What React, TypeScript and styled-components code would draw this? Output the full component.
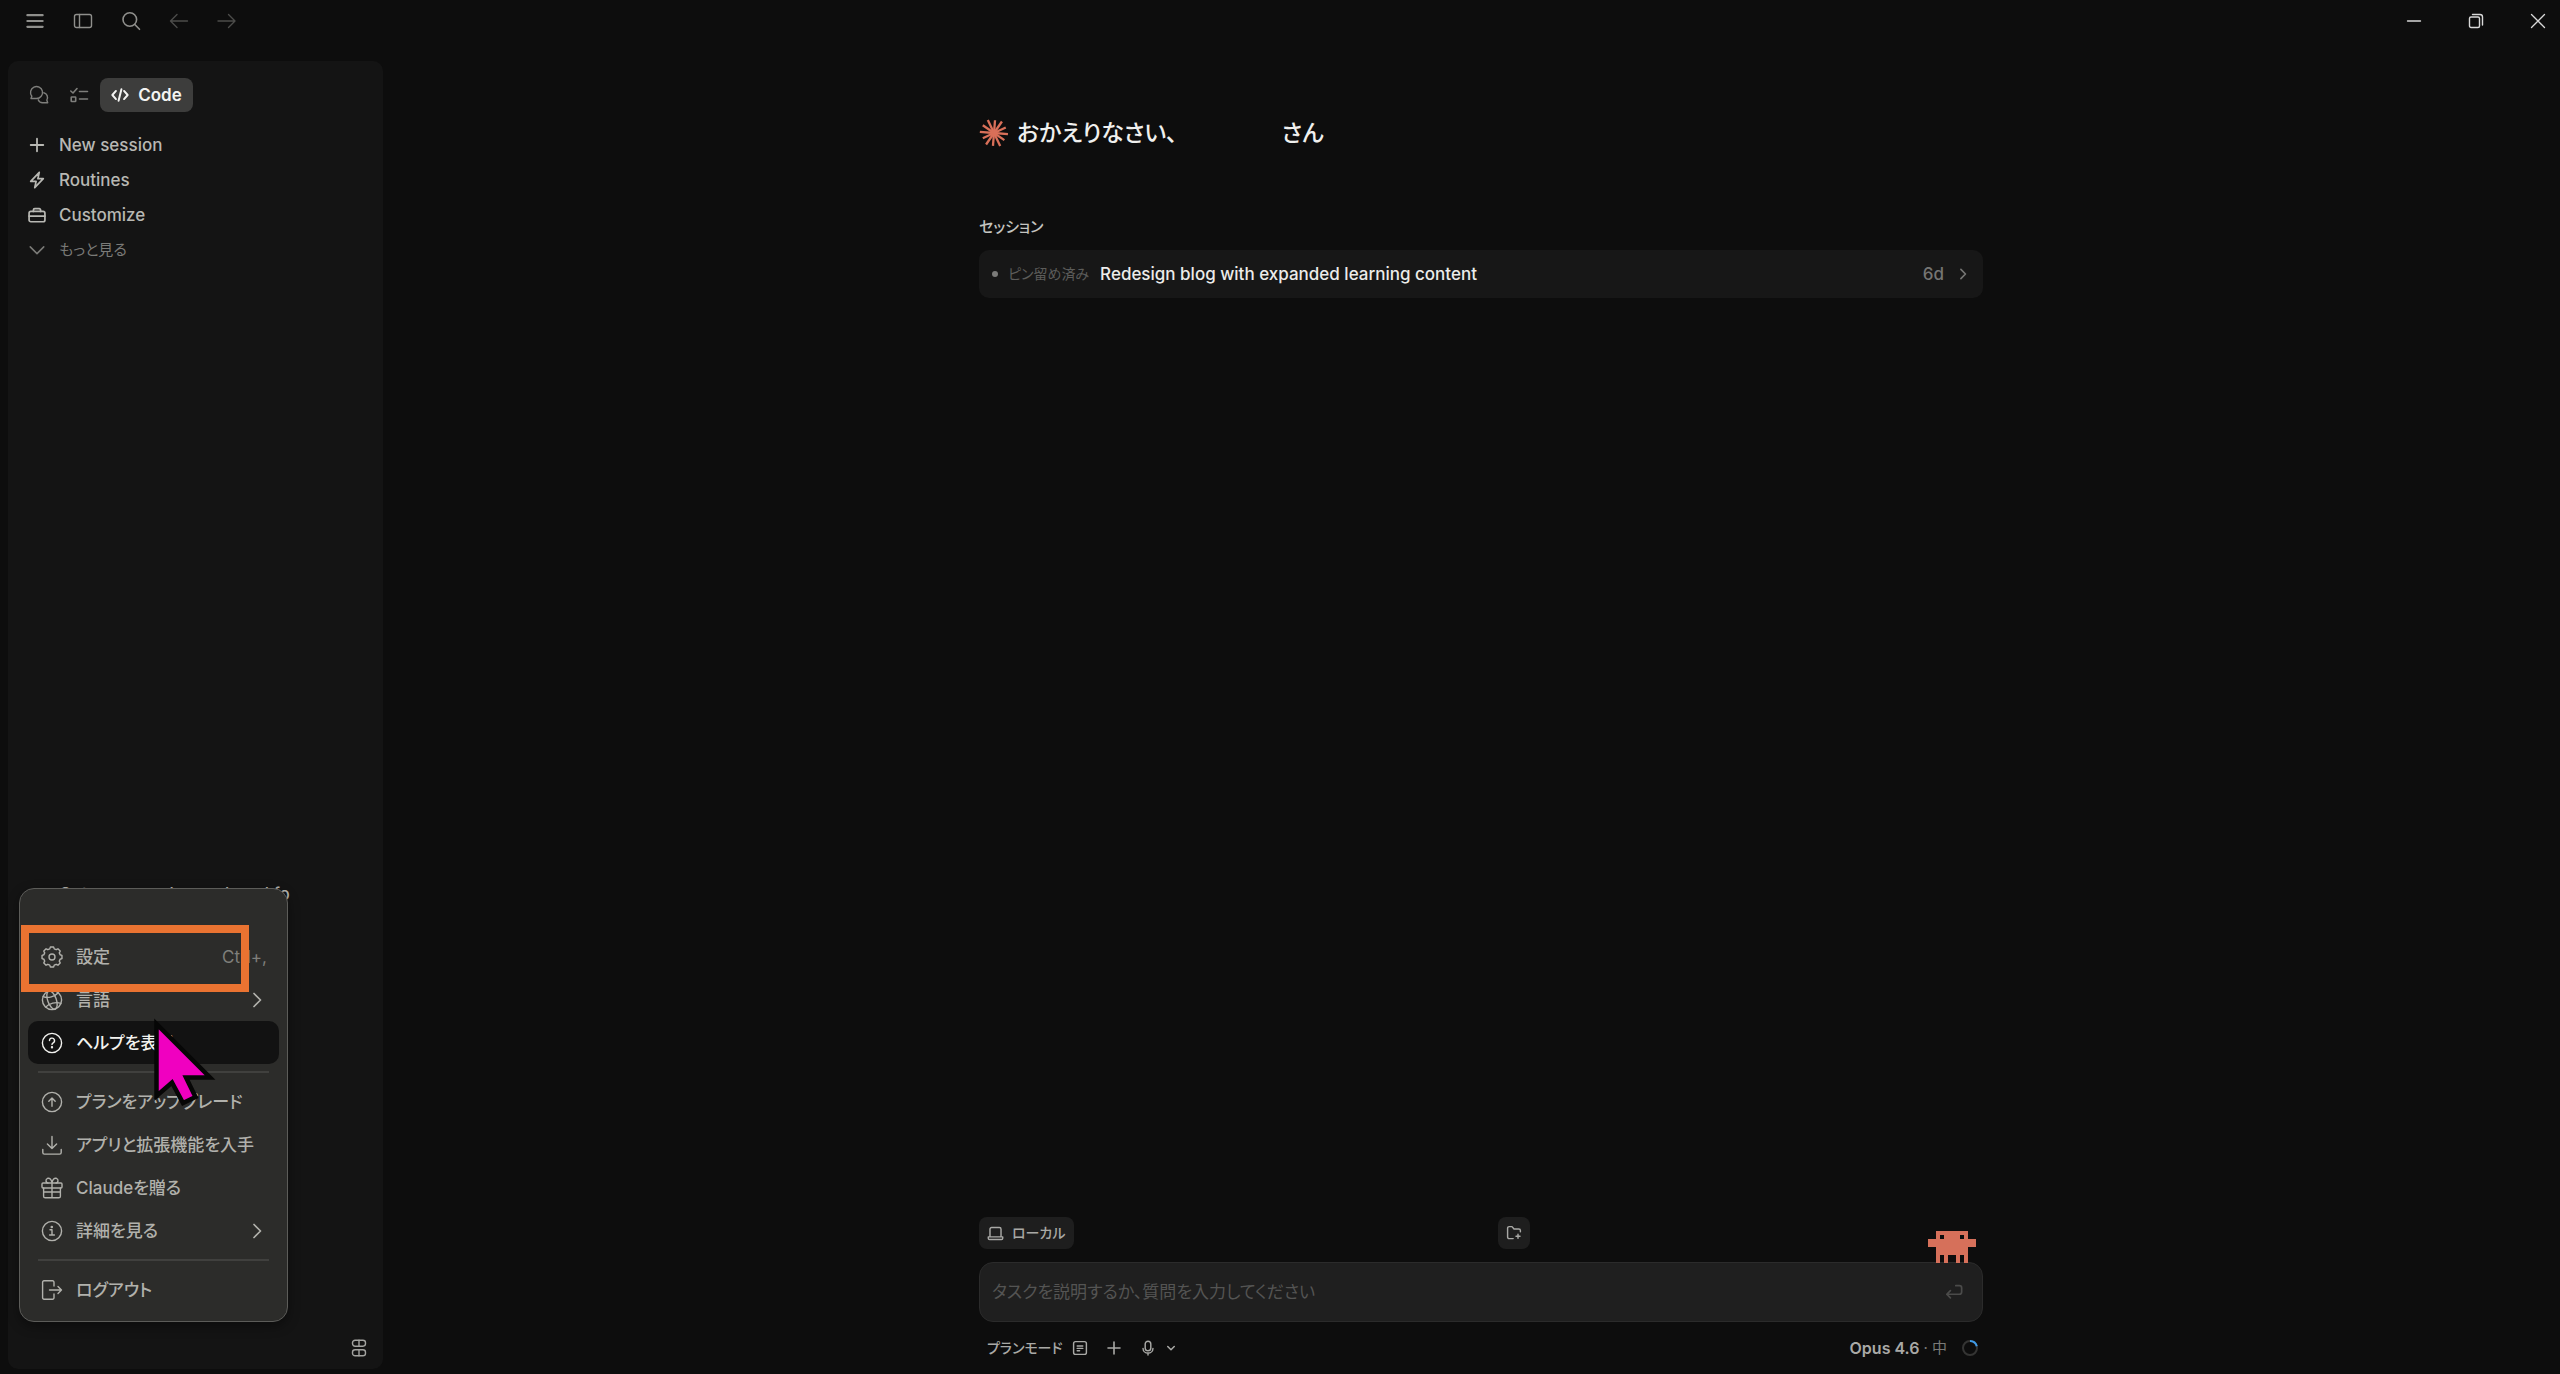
import React from "react";
import styled, { createGlobalStyle } from "styled-components";

const GlobalStyle = createGlobalStyle`
  *, *::before, *::after { box-sizing: border-box; }
  body {
    margin: 0;
    background: #0d0d0d;
    color: #b4b4b0;
    font-family: Inter, "Noto Sans CJK JP", sans-serif;
    font-size: 17px;
    line-height: 24px;
    font-feature-settings: "palt";
  }
  button, input { font: inherit; font-feature-settings: "palt"; color: inherit; }
`;

const Window = styled.div`
  height: 100vh;
  display: flex;
  flex-direction: column;
  overflow: hidden;
`;

const TitleBar = styled.header`
  flex: none;
  height: 42px;
  display: flex;
  align-items: center;
  justify-content: space-between;
  padding: 0 1px 0 11px;
`;

const BarGroup = styled.div`
  display: flex;
  align-items: center;
`;

const BareButton = styled.button`
  display: flex;
  align-items: center;
  justify-content: center;
  padding: 0;
  border: 0;
  background: none;
`;

const BarButton = styled(BareButton)<{ $dim?: boolean }>`
  width: 48px;
  height: 36px;
  color: ${(p) => (p.$dim ? "#4c4c4a" : "#8f8f8c")};
`;

const WindowButton = styled(BareButton)`
  width: 42px;
  height: 36px;
  color: #d8d8d8;
`;

const WindowControls = styled(BarGroup)`
  gap: 20px;
`;

const Body = styled.div`
  flex: 1;
  min-height: 0;
  display: flex;
`;

const Sidebar = styled.aside`
  position: relative;
  flex: none;
  width: 375px;
  margin: 19px 19px 5px 8px;
  padding: 17px 16px 10px 11px;
  border-radius: 10px;
  background: #141414;
  display: flex;
  flex-direction: column;
`;

const Tabs = styled.div`
  display: flex;
  align-items: center;
  margin-bottom: 15px;
`;

const IconTab = styled(BareButton)`
  width: 40px;
  height: 34px;
  color: #7e7e7b;
`;

const ActiveTab = styled(BareButton)`
  width: 93px;
  height: 34px;
  margin-left: 1px;
  gap: 9px;
  border-radius: 8px;
  background: #3d3d3c;
  color: #f4f4f2;
  font-weight: 600;
`;

const NavItem = styled(BareButton)<{ $dim?: boolean }>`
  width: 100%;
  height: 35px;
  justify-content: flex-start;
  gap: 13px;
  padding-left: 9px;
  color: ${(p) => (p.$dim ? "#7a7a77" : "#b8b8b3")};
  font-size: ${(p) => (p.$dim ? "15px" : "17px")};
  font-weight: ${(p) => (p.$dim ? 400 : 500)};
`;

const Notice = styled.p`
  width: 231px;
  margin: auto 0 431px 40px;
  overflow: hidden;
  white-space: nowrap;
  font-weight: 500;
`;

const SidebarFooter = styled.div`
  display: flex;
  justify-content: flex-end;
`;

const FooterButton = styled(BareButton)`
  width: 16px;
  height: 22px;
  color: #a3a3a0;
`;

const Menu = styled.div`
  position: absolute;
  left: 11px;
  bottom: 47px;
  width: 269px;
  padding: 46px 8px 10px;
  border: 1px solid #5c5c59;
  border-radius: 15px;
  background: #2c2c2a;
  box-shadow: 0 4px 12px rgba(0, 0, 0, 0.4);
`;

const MenuItem = styled(BareButton)<{ $active?: boolean }>`
  width: 100%;
  height: 43px;
  justify-content: flex-start;
  gap: 13px;
  padding: 0 12px 0 13px;
  border-radius: 10px;
  background: ${(p) => (p.$active ? "#121212" : "transparent")};
  color: ${(p) => (p.$active ? "#f2f2ef" : "#b1b1ac")};
  font-weight: 500;
  white-space: nowrap;
`;

const MenuTrail = styled.span`
  display: flex;
  margin-left: auto;
`;

const Shortcut = styled(MenuTrail)`
  color: #7f7f7b;
  font-weight: 400;
`;

const Divider = styled.hr`
  height: 2px;
  margin: 7px 10px;
  border: 0;
  background: #40403e;
`;

const Highlight = styled.div`
  position: absolute;
  left: 1px;
  top: 36px;
  width: 228px;
  height: 67px;
  border: 8px solid #ea7331;
`;

const Pointer = styled.svg`
  position: absolute;
  left: 131px;
  top: 127px;
`;

const Main = styled.main`
  flex: 1;
  display: flex;
  flex-direction: column;
  align-items: center;
  padding: 73px 0 14px;
`;

const Column = styled.div`
  width: 100%;
  max-width: 1004px;
  flex: 1;
  display: flex;
  flex-direction: column;
`;

const Greeting = styled.h1`
  display: flex;
  align-items: center;
  gap: 8px;
  margin: 0 0 64px;
  color: #f0f0ee;
  font-size: 23px;
  line-height: 36px;
  font-weight: 500;
`;

const UserName = styled.span`
  width: 88px;
`;

const SectionTitle = styled.h2`
  margin: 0 0 11px;
  color: #c4c4c0;
  font-size: 15px;
  line-height: 24px;
  font-weight: 500;
`;

const SessionRow = styled.a`
  display: flex;
  align-items: center;
  height: 48px;
  padding: 0 13px;
  border-radius: 10px;
  background: #171717;
  color: #ececea;
  font-weight: 500;
  text-decoration: none;
`;

const Dot = styled.span`
  width: 6px;
  height: 6px;
  margin-right: 10px;
  border-radius: 50%;
  background: #7b7b79;
`;

const Pinned = styled.span`
  margin-right: 11px;
  color: #5c5c5a;
  font-size: 14px;
  font-weight: 400;
`;

const Age = styled.span`
  display: flex;
  align-items: center;
  gap: 12px;
  margin-left: auto;
  color: #757573;
`;

const Composer = styled.form`
  margin-top: auto;
`;

const ChipRow = styled.div`
  display: grid;
  grid-template-columns: 1fr 1fr;
  gap: 34px;
  justify-items: start;
  margin-bottom: 13px;
`;

const Chip = styled(BareButton)`
  height: 32px;
  min-width: 32px;
  gap: 8px;
  padding: 0 8px;
  border-radius: 8px;
  background: #1e1e1e;
  color: #a9a9a6;
  font-size: 14px;
  font-weight: 500;
`;

const PromptBox = styled.div`
  position: relative;
  display: flex;
  align-items: center;
  height: 60px;
  padding: 0 19px 0 12px;
  border: 1px solid #2b2b2b;
  border-radius: 14px;
  background: #1f1f1f;
  color: #4b4b4a;
`;

const Prompt = styled.input`
  flex: 1;
  padding: 0;
  border: 0;
  outline: 0;
  background: none;
  color: #d0d0cd;
  &::placeholder { color: #545453; opacity: 1; }
`;

const Mascot = styled.svg`
  position: absolute;
  right: 6px;
  bottom: 58px;
`;

const Options = styled.div`
  display: flex;
  align-items: center;
  height: 24px;
  margin-top: 14px;
  padding: 0 4px 0 8px;
  color: #a9a9a6;
`;

const OptionButton = styled(BareButton)`
  height: 24px;
  font-size: 14px;
  font-weight: 500;
`;

const OptionIcons = styled.div`
  display: flex;
  align-items: center;
  gap: 18px;
  margin-left: 9px;
`;

const MicGroup = styled.div`
  display: flex;
  gap: 10px;
`;

const ModelButton = styled(OptionButton)`
  margin-left: auto;
  gap: 4px;
  font-size: 16px;
  font-weight: 600;
`;

const Effort = styled.span`
  color: #7a7a77;
  font-size: 15px;
  font-weight: 400;
`;

const Usage = styled.svg`
  margin-left: 14px;
`;

type IconProps = {
  w?: number;
  h?: number;
  box?: string;
  stroke?: number;
  children: React.ReactNode;
};

const Icon = ({ w = 20, h = w, box = "0 0 20 20", stroke = 1.4, children }: IconProps) => (
  <svg
    width={w}
    height={h}
    viewBox={box}
    fill="none"
    stroke="currentColor"
    strokeWidth={stroke}
    strokeLinecap="round"
    strokeLinejoin="round"
    aria-hidden="true"
  >
    {children}
  </svg>
);

const ChevronRight = ({ size = 20 }: { size?: number }) => (
  <Icon w={size} stroke={1.7}>
    <path d="M7 3.5 13.5 10 7 16.5" />
  </Icon>
);

const gearPath = (() => {
  const points: string[] = [];
  const teeth = 8;
  for (let i = 0; i < teeth; i++) {
    const mid = (i / teeth) * Math.PI * 2;
    [
      [-0.27, 8.4],
      [-0.16, 10.1],
      [0.16, 10.1],
      [0.27, 8.4],
    ].forEach(([offset, r]) => {
      points.push(
        `${(11 + Math.cos(mid + offset) * r).toFixed(2)} ${(11 + Math.sin(mid + offset) * r).toFixed(2)}`
      );
    });
  }
  return `M${points.join("L")}Z`;
})();

const Starburst = () => (
  <svg width="30" height="30" viewBox="0 0 30 30" stroke="#d97059" strokeWidth="2.3" aria-hidden="true">
    {[14, 12.6, 14.4, 13, 14, 12.4, 14.2, 13.6, 14.4, 12.8, 14, 13].map((r, i) => {
      const a = (i / 12) * Math.PI * 2 + 0.08;
      return <line key={i} x1="15" y1="15" x2={15 + Math.cos(a) * r} y2={15 + Math.sin(a) * r} />;
    })}
  </svg>
);

const menuIcons = {
  settings: (
    <Icon w={22} box="0 0 22 22">
      <path d={gearPath} />
      <circle cx="11" cy="11" r="3" />
    </Icon>
  ),
  language: (
    <Icon w={22} box="0 0 22 22">
      <circle cx="11" cy="11" r="9.6" />
      <ellipse cx="11" cy="11" rx="4.3" ry="9.6" transform="rotate(-20 11 11)" />
      <path d="M2.2 7.6C7 9.6 14 7.5 17.3 3.8M4.6 18.1C8 14.4 15 12.4 19.8 14.4" />
    </Icon>
  ),
  help: (
    <Icon w={22} box="0 0 22 22">
      <circle cx="11" cy="11" r="9.6" />
      <path d="M8.5 8.6a2.5 2.5 0 1 1 3.7 2.2c-.8.5-1.2.9-1.2 1.8" />
      <circle cx="11" cy="15.3" r=".5" fill="currentColor" />
    </Icon>
  ),
  upgrade: (
    <Icon w={22} box="0 0 22 22">
      <circle cx="11" cy="11" r="9.6" />
      <path d="M11 15.2V7M7.8 10.2 11 7l3.2 3.2" />
    </Icon>
  ),
  download: (
    <Icon w={22} box="0 0 22 22">
      <path d="M11 2.5v12M6.4 10 11 14.6l4.6-4.6M1.8 15.5v3a1.6 1.6 0 0 0 1.6 1.6h15.2a1.6 1.6 0 0 0 1.6-1.6v-3" />
    </Icon>
  ),
  gift: (
    <Icon w={22} box="0 0 22 22">
      <rect x="1" y="6" width="20" height="5" rx="1" />
      <path d="M2.6 11v8.2a1.6 1.6 0 0 0 1.6 1.6h13.6a1.6 1.6 0 0 0 1.6-1.6V11M11 6v14.8M2.6 15h16.8M11 6C10.5 2 8.5.8 6.6 1.3 4.2 2 4.6 6 7 6M11 6c.5-4 2.5-5.2 4.4-4.7C17.8 2 17.4 6 15 6" />
    </Icon>
  ),
  info: (
    <Icon w={22} box="0 0 22 22">
      <circle cx="11" cy="11" r="9.6" />
      <path d="M9 9.8h2V15M8.6 15h4.8" />
      <circle cx="10.8" cy="7" r=".6" fill="currentColor" />
    </Icon>
  ),
  logout: (
    <Icon w={22} box="0 0 22 22">
      <path d="M13 7V3.2A1.4 1.4 0 0 0 11.6 1.8H3A1.4 1.4 0 0 0 1.6 3.2v15.6A1.4 1.4 0 0 0 3 20.2h8.6a1.4 1.4 0 0 0 1.4-1.4V15M8.5 11h12M17 7.5l3.5 3.5-3.5 3.5" />
    </Icon>
  ),
};

export default function App() {
  return (
    <Window>
      <GlobalStyle />
      <TitleBar>
        <BarGroup>
          <BarButton aria-label="メニュー">
            <Icon w={18} stroke={2.4}>
              <path d="M1.5 3.5h17M1.5 10h17M1.5 16.5h17" />
            </Icon>
          </BarButton>
          <BarButton aria-label="サイドバー">
            <Icon w={20}>
              <rect x="1.5" y="3.5" width="17" height="13" rx="2" />
              <path d="M6.5 3.5v13" />
            </Icon>
          </BarButton>
          <BarButton aria-label="検索">
            <Icon w={20} stroke={1.6}>
              <circle cx="8.8" cy="8.5" r="6.8" />
              <path d="m13.8 13.5 4.7 4.8" />
            </Icon>
          </BarButton>
          <BarButton $dim aria-label="戻る">
            <Icon w={20}>
              <path d="M18.5 10H1.5M8 3.5 1.5 10 8 16.5" />
            </Icon>
          </BarButton>
          <BarButton $dim aria-label="進む">
            <Icon w={20}>
              <path d="M1 10h17M11.5 3.5l6.5 6.5-6.5 6.5" />
            </Icon>
          </BarButton>
        </BarGroup>
        <WindowControls>
          <WindowButton aria-label="最小化">
            <Icon w={16} box="0 0 16 16">
              <path d="M1.5 8h13" />
            </Icon>
          </WindowButton>
          <WindowButton aria-label="元に戻す">
            <Icon w={16} box="0 0 16 16">
              <rect x="1.5" y="4" width="10" height="10.5" rx="1.5" />
              <path d="M4.5 1.5H12A2.5 2.5 0 0 1 14.5 4v8" />
            </Icon>
          </WindowButton>
          <WindowButton aria-label="閉じる">
            <Icon w={16} box="0 0 16 16" stroke={1.3}>
              <path d="m1.5 1.5 13 13M14.5 1.5l-13 13" />
            </Icon>
          </WindowButton>
        </WindowControls>
      </TitleBar>

      <Body>
        <Sidebar>
          <Tabs>
            <IconTab aria-label="チャット">
              <Icon w={20}>
                <path d="M2 13.5h5.5A6 6 0 1 0 2.8 11.2Z" />
                <path d="M14.8 7.8a4.8 4.8 0 0 1 3 7.2l.9 2.8h-5.2a4.8 4.8 0 0 1-4.3-3" />
              </Icon>
            </IconTab>
            <IconTab aria-label="タスク">
              <Icon w={20} stroke={1.6}>
                <path d="M1.8 6 4 8l4-4.5M10.5 6.5h8M10.5 14h8" />
                <rect x="2.2" y="12" width="4.5" height="4.5" rx=".6" />
              </Icon>
            </IconTab>
            <ActiveTab>
              <Icon w={18} stroke={2.2}>
                <path d="M5.5 5.5 1.5 10l4 4.5M14.5 5.5l4 4.5-4 4.5M11.6 3.5 8.4 16.5" />
              </Icon>
              Code
            </ActiveTab>
          </Tabs>
          <nav>
            <NavItem>
              <Icon w={18} stroke={2}>
                <path d="M10 3v14M3 10h14" />
              </Icon>
              New session
            </NavItem>
            <NavItem>
              <Icon w={18} stroke={1.9}>
                <path d="M12.5 1.5 3 11.5h6L7.5 18.5 17 8.5h-6Z" />
              </Icon>
              Routines
            </NavItem>
            <NavItem>
              <Icon w={18} stroke={1.9}>
                <rect x="1.2" y="6" width="17.6" height="11.5" rx="2" />
                <path d="M6 6V4.5a1.5 1.5 0 0 1 1.5-1.5h5A1.5 1.5 0 0 1 14 4.5V6M1.2 11.2h17.6" />
              </Icon>
              Customize
            </NavItem>
            <NavItem $dim>
              <Icon w={18} stroke={1.7}>
                <path d="m2.5 6.5 7.5 7.5 7.5-7.5" />
              </Icon>
              もっと見る
            </NavItem>
          </nav>
          <Notice>Get more on demand, and for</Notice>
          <SidebarFooter>
            <FooterButton aria-label="表示">
              <Icon w={16} h={18} box="0 0 16 18">
                <rect x="1.5" y="1.2" width="13" height="6" rx="2.6" />
                <rect x="1.5" y="10.8" width="13" height="6" rx="2.6" />
                <path d="M8 1.2v6M8 10.8v6" />
              </Icon>
            </FooterButton>
          </SidebarFooter>

          <Menu>
            <MenuItem>
              {menuIcons.settings}
              設定
              <Shortcut>Ctrl+,</Shortcut>
            </MenuItem>
            <MenuItem>
              {menuIcons.language}
              言語
              <MenuTrail>
                <ChevronRight />
              </MenuTrail>
            </MenuItem>
            <MenuItem $active>
              {menuIcons.help}
              ヘルプを表示
            </MenuItem>
            <Divider />
            <MenuItem>
              {menuIcons.upgrade}
              プランをアップグレード
            </MenuItem>
            <MenuItem>
              {menuIcons.download}
              アプリと拡張機能を入手
            </MenuItem>
            <MenuItem>
              {menuIcons.gift}
              Claudeを贈る
            </MenuItem>
            <MenuItem>
              {menuIcons.info}
              詳細を見る
              <MenuTrail>
                <ChevronRight />
              </MenuTrail>
            </MenuItem>
            <Divider />
            <MenuItem>
              {menuIcons.logout}
              ログアウト
            </MenuItem>
            <Highlight />
            <Pointer width="70" height="94" viewBox="0 0 70 94" aria-hidden="true">
              <path
                d="M5.5 8V80L21 66.5 32 87 44.5 81 35 61.5H59Z"
                fill="#f000c0"
                stroke="#060606"
                strokeWidth="4.5"
              />
            </Pointer>
          </Menu>
        </Sidebar>

        <Main>
          <Column>
            <Greeting>
              <Starburst />
              <span>おかえりなさい、</span>
              <UserName />
              <span>さん</span>
            </Greeting>
            <SectionTitle>セッション</SectionTitle>
            <SessionRow href="#session">
              <Dot />
              <Pinned>ピン留め済み</Pinned>
              Redesign blog with expanded learning content
              <Age>
                6d
                <Icon w={14} stroke={2.4}>
                  <path d="M7 3.5 13.5 10 7 16.5" />
                </Icon>
              </Age>
            </SessionRow>

            <Composer>
              <ChipRow>
                <Chip type="button">
                  <Icon w={17} stroke={1.7}>
                    <path d="M3.5 14V5A2 2 0 0 1 5.5 3h9a2 2 0 0 1 2 2v9M1.5 14h17v1.5a1.5 1.5 0 0 1-1.5 1.5H3a1.5 1.5 0 0 1-1.5-1.5Z" />
                  </Icon>
                  ローカル
                </Chip>
                <Chip type="button" aria-label="フォルダーを追加">
                  <Icon w={16} stroke={1.8}>
                    <path d="M9 17H4a2 2 0 0 1-2-2V4a2 2 0 0 1 2-2h3.5l2.5 3h6a2 2 0 0 1 2 2v1.5M15 11.5v5M12.5 14h5" />
                  </Icon>
                </Chip>
              </ChipRow>
              <PromptBox>
                <Prompt
                  aria-label="タスク"
                  placeholder="タスクを説明するか、質問を入力してください"
                />
                <Icon w={18} stroke={1.9}>
                  <path d="M12 3h4a2.5 2.5 0 0 1 2.5 2.5V10a2.5 2.5 0 0 1-2.5 2.5H2M6 8.5l-4 4 4 4" />
                </Icon>
                <Mascot width="48" height="32" viewBox="0 0 48 32" aria-hidden="true">
                  <path
                    d="M8 0H40V8H48V16H40V32H36V24H32V32H28V24H20V32H16V24H12V32H8V16H0V8H8Z"
                    fill="#d6705a"
                  />
                  <path d="M12 4h4v4h-4ZM32 4h4v4h-4Z" fill="#0d0d0d" />
                </Mascot>
              </PromptBox>
              <Options>
                <OptionButton type="button">プランモード</OptionButton>
                <OptionIcons>
                  <OptionButton type="button" aria-label="計画">
                    <Icon w={16} stroke={1.8}>
                      <rect x="2" y="2" width="16" height="16" rx="2.5" />
                      <path d="M6.5 7.5h7M6.5 10.5h7M6.5 13.5h3" />
                    </Icon>
                  </OptionButton>
                  <OptionButton type="button" aria-label="追加">
                    <Icon w={16} stroke={2}>
                      <path d="M10 2.5v15M2.5 10h15" />
                    </Icon>
                  </OptionButton>
                  <MicGroup>
                    <OptionButton type="button" aria-label="音声入力">
                      <Icon w={16} stroke={1.8}>
                        <rect x="6.5" y="1.5" width="7" height="12" rx="3.5" />
                        <path d="M3.8 10.5a6.2 5.8 0 0 0 12.4 0M10 16.3v2.4" />
                      </Icon>
                    </OptionButton>
                    <OptionButton type="button" aria-label="音声の設定">
                      <Icon w={10} stroke={3}>
                        <path d="m3.5 7 6.5 6.5L16.5 7" />
                      </Icon>
                    </OptionButton>
                  </MicGroup>
                </OptionIcons>
                <ModelButton type="button">
                  Opus 4.6
                  <Effort>· 中</Effort>
                </ModelButton>
                <Usage width="18" height="18" viewBox="0 0 18 18" fill="none" strokeWidth="2" role="img" aria-label="使用量">
                  <circle cx="9" cy="9" r="7" stroke="#343433" />
                  <path d="M9 2A7 7 0 0 1 15.8 7.3" stroke="#3f9be8" />
                </Usage>
              </Options>
            </Composer>
          </Column>
        </Main>
      </Body>
    </Window>
  );
}
